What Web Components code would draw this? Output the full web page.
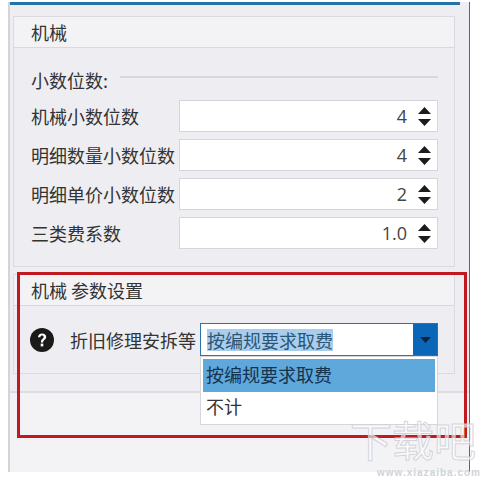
<!DOCTYPE html>
<html>
<head>
<meta charset="utf-8">
<style>
html, body { margin: 0; padding: 0; background: #fff; }
body { width: 485px; height: 479px; overflow: hidden; font-family: "Noto Sans CJK SC", "Noto Sans", sans-serif; }
</style>
</head>
<body>
<settings-window>
  <settings-panel title-text="机械">
    <group-line>小数位数:</group-line>
    <spin-row label="机械小数位数" value="4"></spin-row>
    <spin-row label="明细数量小数位数" value="4"></spin-row>
    <spin-row label="明细单价小数位数" value="2"></spin-row>
    <spin-row label="三类费系数" value="1.0"></spin-row>
  </settings-panel>
  <settings-panel class="second" title-text="机械 参数设置">
    <combo-row label="折旧修理安拆等" value="按编规要求取费"></combo-row>
  </settings-panel>
</settings-window>
<script>
(function() {

class SettingsWindow extends HTMLElement {
  constructor() {
    super();
    this.attachShadow({mode: "open"}).innerHTML =
    `<style>
      :host {
        display: block;
        position: relative;
        width: 485px;
        height: 479px;
        overflow: hidden;
      }
      .frame {
        box-sizing: border-box;
        margin: 2px 0 0 8px;
        width: 462px;
        height: 470px;
        background: #eeeef2;
        border-left: 2px solid #d3d3da;
        border-right: 1px solid #2a75a5;
        display: flex;
        flex-direction: column;
      }
      .bar { height: 3px; margin-right: 9px; background: #2273a6; flex: none; }
      .content {
        flex: none;
        box-sizing: border-box;
        height: 386px;
        padding: 11px 14px 0 3px;
        display: flex;
        flex-direction: column;
        gap: 7px;
      }
      .footer {
        flex: 1;
        border-top: 2px solid #dcdce3;
        background: #f3f3f6;
      }
      .mark {
        position: absolute;
        left: 17px;
        top: 272px;
        width: 450px;
        height: 166px;
        box-sizing: border-box;
        border: 3px solid #c2181f;
        pointer-events: none;
      }
      .logo {
        position: absolute;
        left: 350px;
        top: 419px;
        font: 400 42px/48px "Liberation Sans", "Noto Sans CJK SC", sans-serif;
        color: rgba(255,255,255,0.6);
        -webkit-text-stroke: 1px rgba(205,205,210,0.85);
        white-space: nowrap;
      }
      .url {
        position: absolute;
        left: 377px;
        top: 467px;
        font: 700 10px/11px "Liberation Sans", sans-serif;
        letter-spacing: 1px;
        color: #cfd3d7;
        white-space: nowrap;
      }
    </style>
    <div class="frame">
      <div class="bar"></div>
      <div class="content"><slot></slot></div>
      <div class="footer"></div>
    </div>
    <div class="mark"></div>
    <div class="logo">下载吧</div>
    <div class="url">www.xiazaiba.com</div>`;
  }
}

class SettingsPanel extends HTMLElement {
  constructor() {
    super();
    this.attachShadow({mode: "open"}).innerHTML =
    `<style>
      :host {
        display: block;
        box-sizing: border-box;
        border: 1px solid #dadae0;
        height: 251px;
        color: #333;
        font-size: 18px;
      }
      :host(.second) { height: 100px; }
      .head {
        height: 30px;
        line-height: 30px;
        padding-left: 17px;
        background: #f3f3f6;
        border-bottom: 1px solid #d8d8de;
        white-space: nowrap;
      }
      .body {
        padding: 17px 16px 0 17px;
        display: flex;
        flex-direction: column;
        gap: 7px;
      }
    </style>
    <div class="head"></div>
    <div class="body"><slot></slot></div>`;
    this.shadowRoot.querySelector(".head").textContent = this.getAttribute("title-text");
  }
}

class GroupLine extends HTMLElement {
  constructor() {
    super();
    this.attachShadow({mode: "open"}).innerHTML =
    `<style>
      :host {
        display: flex;
        align-items: center;
        gap: 6px;
        height: 26px;
        margin-top: 2px;
      }
      .text { white-space: nowrap; width: 83px; overflow: hidden; }
      .rule { flex: 1; height: 2px; background: #d7d7dd; margin-top: -6px; }
    </style>
    <span class="text"><slot></slot></span><span class="rule"></span>`;
  }
}

class SpinRow extends HTMLElement {
  constructor() {
    super();
    this.attachShadow({mode: "open"}).innerHTML =
    `<style>
      :host {
        display: flex;
        align-items: center;
        height: 32px;
      }
      .label { width: 148px; flex: none; white-space: nowrap; }
      .box {
        flex: 1;
        box-sizing: border-box;
        height: 32px;
        background: #fff;
        border: 1px solid #d5d5dc;
        display: flex;
        align-items: center;
        justify-content: flex-end;
        padding-right: 6px;
        gap: 11px;
        font: 18px "Open Sans", sans-serif;
        color: #444;
      }
      svg { display: block; }
    </style>
    <span class="label"></span>
    <div class="box">
      <span class="num"></span>
      <svg width="13" height="19" viewBox="0 0 13 19"><path d="M6.5 0 L13 7 H0 Z M0 12 H13 L6.5 19 Z" fill="#1c1c1c"/></svg>
    </div>`;
    this.shadowRoot.querySelector(".label").textContent = this.getAttribute("label");
    this.shadowRoot.querySelector(".num").textContent = this.getAttribute("value");
  }
}

class ComboRow extends HTMLElement {
  constructor() {
    super();
    this.attachShadow({mode: "open"}).innerHTML =
    `<style>
      :host {
        display: flex;
        align-items: center;
        height: 33px;
        position: relative;
      }
      svg { display: block; flex: none; }
      .help { margin: 0 16px 0 -1px; }
      .label { width: 130px; flex: none; white-space: nowrap; }
      .box {
        flex: 1;
        box-sizing: border-box;
        height: 33px;
        background: #fff;
        border: 1px solid #2a74a8;
        display: flex;
        align-items: stretch;
      }
      .val { flex: 1; display: flex; align-items: center; padding-left: 6px; }
      .val span { background: #a9cdec; color: #2b5677; line-height: 22px; white-space: nowrap; }
      .arrow {
        width: 24px;
        background: #0b66b8;
        display: flex;
        align-items: center;
        justify-content: center;
      }
      .menu {
        position: absolute;
        left: 169px;
        top: 33px;
        width: 238px;
        height: 69px;
        box-sizing: border-box;
        background: #fff;
        border: 1px solid #d5d5dc;
        padding: 2px;
      }
      .item { height: 33px; line-height: 29px; padding-left: 3px; white-space: nowrap; }
      .item.on { line-height: 31px; background: #5fa8dc; color: #17324c; }
    </style>
    <svg class="help" width="24" height="24" viewBox="0 0 24 24">
      <circle cx="12" cy="12" r="12" fill="#1a1a1a"/>
      <path d="M8 9.2 C8 6.8 9.8 5.4 12.1 5.4 C14.5 5.4 16.2 6.8 16.2 8.9 C16.2 11.6 13.1 11.7 13.1 14.4 H10.9 C10.9 10.8 13.7 10.8 13.7 9 C13.7 8.1 13 7.5 12.1 7.5 C11 7.5 10.4 8.2 10.3 9.2 Z" fill="#fff"/>
      <rect x="10.7" y="15.6" width="2.6" height="2.8" fill="#fff"/>
    </svg>
    <span class="label"></span>
    <div class="box">
      <div class="val"><span></span></div>
      <div class="arrow"><svg width="11" height="6" viewBox="0 0 11 6"><path d="M0 0 H11 L5.5 6 Z" fill="#10243a"/></svg></div>
    </div>
    <div class="menu">
      <div class="item on"></div>
      <div class="item">不计</div>
    </div>`;
    const value = this.getAttribute("value");
    this.shadowRoot.querySelector(".label").textContent = this.getAttribute("label");
    this.shadowRoot.querySelector(".val span").textContent = value;
    this.shadowRoot.querySelector(".item.on").textContent = value;
  }
}

customElements.define("settings-window", SettingsWindow);
customElements.define("settings-panel", SettingsPanel);
customElements.define("group-line", GroupLine);
customElements.define("spin-row", SpinRow);
customElements.define("combo-row", ComboRow);

})();
</script>
</body>
</html>
